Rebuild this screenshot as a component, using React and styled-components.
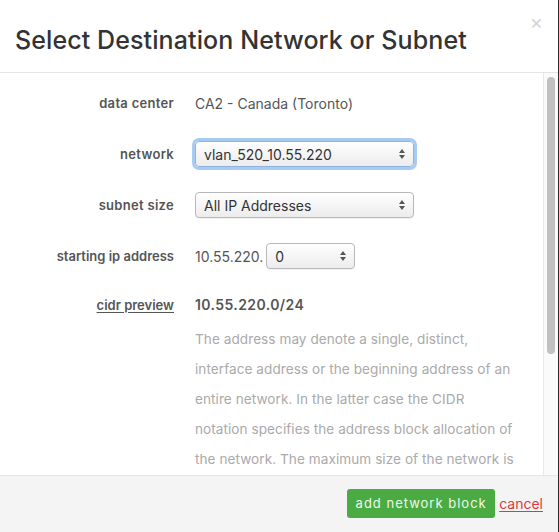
import React from "react";
import styled, { createGlobalStyle } from "styled-components";

const Global = createGlobalStyle`
  html, body { margin: 0; padding: 0; background: #2b2b2b; }
  body { font-family: Inter, "Helvetica Neue", Arial, sans-serif; -webkit-font-smoothing: antialiased; }
  * { box-sizing: border-box; }
`;

const Modal = styled.div`
  width: 558px;
  height: 532px;
  background: #fff;
  display: flex;
  flex-direction: column;
  overflow: hidden;
`;

const Header = styled.div`
  height: 73px;
  flex: none;
  display: flex;
  align-items: center;
  justify-content: space-between;
  padding: 0 15px;
  border-bottom: 1px solid #e5e5e5;
`;

const Title = styled.h2`
  margin: 0;
  font-size: 25px;
  font-weight: 500;
  color: #333;
  letter-spacing: 0.1px;
  padding-top: 8px;
  white-space: nowrap;
`;

const Close = styled.span`
  align-self: flex-start;
  margin-top: 12px;
  font-size: 20px;
  color: #d4d4d4;
  font-weight: 400;
  line-height: 20px;
`;

const Body = styled.div`
  flex: 1;
  display: flex;
  min-height: 0;
`;

const Content = styled.div`
  flex: 1;
  overflow: hidden;
  padding: 17px 0 0 15px;
`;

const Track = styled.div`
  width: 15px;
  flex: none;
  background: #fafafa;
  border-left: 1px solid #e8e8e8;
  padding: 4px 0 0 3px;
`;

const Thumb = styled.div`
  width: 8px;
  height: 277px;
  background: #c1c1c1;
  border-radius: 4px;
`;

const Form = styled.div`
  display: grid;
  grid-template-columns: 159px 1fr;
  column-gap: 21px;
  row-gap: 25px;
  align-items: center;
`;

const Label = styled.div`
  text-align: right;
  font-size: 13px;
  font-weight: 600;
  color: #555;
  letter-spacing: ${(p) => (p.$wide ? "0.3px" : "0")};
  align-self: ${(p) => (p.$top ? "start" : "center")};
  line-height: ${(p) => (p.$top ? "22px" : "normal")};
  text-decoration: ${(p) => (p.$underline ? "underline" : "none")};
  text-underline-offset: 2px;
`;

const Value = styled.div`
  font-size: 14px;
  color: #555;
  display: flex;
  align-items: center;
  min-height: 26px;
`;

const Stack = styled.div`
  display: flex;
  flex-direction: column;
`;

const Cidr = styled.div`
  font-size: 14px;
  font-weight: 600;
  color: #555;
  letter-spacing: 0.4px;
  line-height: 22px;
`;

const Desc = styled.p`
  margin: 8px 0 0;
  width: 321px;
  font-size: 13.6px;
  letter-spacing: 0.05px;
  line-height: 30px;
  color: #aaa;
`;

const SelectBox = styled.div`
  width: ${(p) => p.$w}px;
  height: 26px;
  border: 1px solid #b9b9b9;
  border-radius: 4px;
  background: linear-gradient(#ffffff, #ececec);
  display: flex;
  align-items: center;
  justify-content: space-between;
  padding: 0 7px 0 8px;
  font-size: 14px;
  color: #333;
  box-shadow: ${(p) => (p.$focus ? "0 0 0 3px #a8cbf3" : "0 1px 1px rgba(0,0,0,0.06)")};
  border-color: ${(p) => (p.$focus ? "#8fb3e0" : "#b9b9b9")};
`;

const Prefix = styled.span`
  margin-right: 3px;
`;

const Footer = styled.div`
  height: 57px;
  flex: none;
  background: #f4f4f4;
  border-top: 1px solid #e5e5e5;
  display: flex;
  align-items: center;
  justify-content: flex-end;
  padding: 0 15px 2px 0;
  gap: 4px;
`;

const Button = styled.button`
  width: 148px;
  height: 29px;
  border: none;
  border-radius: 3px;
  background: #4aab42;
  color: #eef7ec;
  font-family: inherit;
  font-size: 13px;
  letter-spacing: 1px;
  padding: 0;
  white-space: nowrap;
`;

const Cancel = styled.a`
  color: #e3363d;
  font-size: 14px;
  text-decoration: underline;
  text-underline-offset: 2px;
`;

const Arrows = () => (
  <svg width="8" height="12" viewBox="0 0 8 12">
    <path d="M4 1 L7 5 L1 5 Z" fill="#555" />
    <path d="M4 11 L7 7 L1 7 Z" fill="#555" />
  </svg>
);

const Select = ({ w, focus, children }) => (
  <SelectBox $w={w} $focus={focus}>
    <span>{children}</span>
    <Arrows />
  </SelectBox>
);

export default function App() {
  return (
    <>
      <Global />
      <Modal>
        <Header>
          <Title>Select Destination Network or Subnet</Title>
          <Close>×</Close>
        </Header>
        <Body>
          <Content>
            <Form>
              <Label $wide>data center</Label>
              <Value>CA2 - Canada (Toronto)</Value>

              <Label $wide>network</Label>
              <Value>
                <Select w={219} focus>vlan_520_10.55.220</Select>
              </Value>

              <Label $wide>subnet size</Label>
              <Value>
                <Select w={219}>All IP Addresses</Select>
              </Value>

              <Label>starting ip address</Label>
              <Value>
                <Prefix>10.55.220.</Prefix>
                <Select w={89}>0</Select>
              </Value>

              <Label $top $underline>cidr preview</Label>
              <Stack>
                <Cidr>10.55.220.0/24</Cidr>
                <Desc>
                  The address may denote a single, distinct, interface address or the
                  beginning address of an entire network. In the latter case the CIDR
                  notation specifies the address block allocation of the network. The
                  maximum size of the network is given by the number of addresses that
                  are possible with the remaining, least-significant bits below the
                  network prefix.
                </Desc>
              </Stack>
            </Form>
          </Content>
          <Track>
            <Thumb />
          </Track>
        </Body>
        <Footer>
          <Button>add network block</Button>
          <Cancel>cancel</Cancel>
        </Footer>
      </Modal>
    </>
  );
}
